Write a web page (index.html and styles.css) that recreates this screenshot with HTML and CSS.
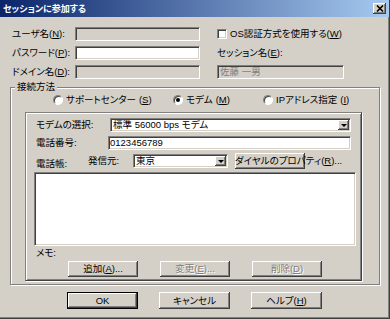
FILE: index.html
```html
<!DOCTYPE html>
<html lang="ja">
<head>
    <meta charset="UTF-8">
    <meta name="viewport" content="width=device-width, initial-scale=1.0">
    <title>セッションに参加する</title>
    <link rel="stylesheet" href="styles.css">
</head>
<body>
    <div class="dialog">
        <div class="titlebar">
            <span class="title">セッションに参加する</span>
            <span class="close">
                <svg width="8" height="7" viewBox="0 0 8 7">
                    <path d="M1 0.5 L7 6.5 M7 0.5 L1 6.5" stroke="#000" stroke-width="1.6" fill="none"/>
                </svg>
            </span>
        </div>

        <div class="account">
            <span class="lbl">ユーザ名<span class="key">(<u>N</u>):</span></span>
            <div class="field disabled"></div>
            <div class="check-row right">
                <span class="checkbox"></span>
                <span>OS認証方式を使用する<span class="key">(<u>W</u>)</span></span>
            </div>

            <span class="lbl">パスワード<span class="key">(<u>P</u>):</span></span>
            <div class="field"></div>
            <span class="lbl right">セッション名<span class="key">(<u>E</u>):</span></span>

            <span class="lbl">ドメイン名<span class="key">(<u>D</u>):</span></span>
            <div class="field disabled"></div>
            <div class="field disabled dim right">佐藤 一男</div>
        </div>

        <fieldset class="group">
            <legend>接続方法</legend>
            <div class="radio-row">
                <div class="radio-item wide"><span class="radio"></span>サポートセンター<span class="key">(<u>S</u>)</span></div>
                <div class="radio-item mid"><span class="radio checked"></span>モデム<span class="key">(<u>M</u>)</span></div>
                <div class="radio-item"><span class="radio"></span>IPアドレス指定<span class="key">(<u>I</u>)</span></div>
            </div>

            <div class="panel">
                <div class="row">
                    <span class="lbl modem-lbl">モデムの選択<span class="key">:</span></span>
                    <div class="field combo modem-combo">
                        <span class="combo-text">標準 56000 bps モデム</span>
                        <span class="combo-btn"><span class="arrow"></span></span>
                    </div>
                </div>
                <div class="row row-phone">
                    <span class="lbl phone-lbl">電話番号<span class="key">:</span></span>
                    <div class="field phone-field">0123456789</div>
                </div>
                <div class="row row-book">
                    <span class="lbl book-lbl">電話帳<span class="key">:</span></span>
                    <span class="lbl from-lbl">発信元<span class="key">:</span></span>
                    <div class="field combo from-combo">
                        <span class="combo-text">東京</span>
                        <span class="combo-btn"><span class="arrow"></span></span>
                    </div>
                    <button class="btn dial-btn">ダイヤルのプロパティ<span class="key">(<u>R</u>)...</span></button>
                </div>
                <div class="field memo"></div>
                <div class="memo-lbl">メモ<span class="key">:</span></div>
                <div class="btn-row">
                    <button class="btn">追加<span class="key">(<u>A</u>)...</span></button>
                    <button class="btn off">変更<span class="key">(<u>E</u>)...</span></button>
                    <button class="btn off">削除<span class="key">(<u>D</u>)</span></button>
                </div>
            </div>
        </fieldset>

        <div class="footer">
            <button class="btn default">OK</button>
            <button class="btn">キャンセル</button>
            <button class="btn">ヘルプ<span class="key">(<u>H</u>)</span></button>
        </div>
    </div>
</body>
</html>
```

FILE: styles.css
```css
body {
    margin: 0;
    background-color: #d4d0c8;
    font-family: "Liberation Sans", "Noto Sans CJK JP", sans-serif;
    font-size: 9.5px;
    font-feature-settings: "palt";
    color: #000;
}
u {
    text-decoration: underline;
    text-underline-offset: 1px;
}
.key {
    font-family: "Liberation Sans", sans-serif;
}
.dialog {
    width: 390px;
    height: 319px;
    box-sizing: border-box;
    border-right: 1px solid #404040;
    border-bottom: 1px solid #404040;
    box-shadow: inset -1px -1px #808080;
    overflow: hidden;
}

/* title bar */
.titlebar {
    height: 17px;
    display: flex;
    align-items: center;
    padding: 0 3px;
    background: linear-gradient(to right, #0a246a, #a6caf0);
}
.title {
    color: white;
    font-weight: bold;
    font-size: 9px;
    line-height: 12px;
}
.close {
    margin-left: auto;
    width: 13px;
    height: 11px;
    box-sizing: border-box;
    display: flex;
    align-items: center;
    justify-content: center;
    background: #d4d0c8;
    box-shadow: inset -1px -1px #404040, inset 1px 1px #fff, inset -2px -2px #808080;
}

/* top fields */
.account {
    display: grid;
    grid-template-columns: 63px 125px 17px 127px;
    grid-auto-rows: 14px;
    row-gap: 5px;
    align-items: center;
    padding: 10px 0 0 12px;
}
.account .right {
    grid-column: 4;
}
.lbl {
    line-height: 14px;
    white-space: nowrap;
}
.field {
    height: 14px;
    box-sizing: border-box;
    background: white;
    border: 1px solid;
    border-color: #808080 #fff #fff #808080;
    box-shadow: inset 1px 1px #404040, inset -1px -1px #d4d0c8;
    padding: 0 2px;
    line-height: 12px;
    white-space: nowrap;
    overflow: hidden;
}
.field.disabled {
    background: #d4d0c8;
}
.field.dim {
    color: #808080;
}
.check-row {
    display: flex;
    align-items: center;
    gap: 3px;
    line-height: 14px;
    white-space: nowrap;
}
.checkbox {
    width: 10px;
    height: 10px;
    box-sizing: border-box;
    background: white;
    border: 1px solid;
    border-color: #808080 #fff #fff #808080;
    box-shadow: inset 1px 1px #404040, inset -1px -1px #d4d0c8;
}

/* connection group */
.group {
    width: 370px;
    min-width: 0;
    box-sizing: border-box;
    margin: 2px 0 0 10px;
    padding: 0 0 3px 0;
    border: 1px solid #808080;
    box-shadow: inset 1px 1px #fff, 1px 1px #fff;
}
.group legend {
    margin-left: 4px;
    padding: 0 2px;
    line-height: 12px;
    background: #d4d0c8;
}
.radio-row {
    display: flex;
    margin-top: 1px;
    padding-left: 42px;
    line-height: 12px;
}
.radio-item {
    display: flex;
    align-items: center;
    gap: 3px;
    white-space: nowrap;
}
.radio-item.wide {
    width: 120px;
}
.radio-item.mid {
    width: 90px;
}
.radio {
    width: 10px;
    height: 10px;
    box-sizing: border-box;
    border-radius: 50%;
    background: white;
    border: 1px solid;
    border-color: #808080 #fff #fff #808080;
    box-shadow: inset 1px 1px #404040;
    display: flex;
    align-items: center;
    justify-content: center;
}
.radio.checked::after {
    content: "";
    width: 4px;
    height: 4px;
    border-radius: 50%;
    background: #000;
}

.panel {
    width: 337px;
    height: 169px;
    box-sizing: border-box;
    margin: 6px 0 0 14px;
    padding: 5px 0 0 8px;
    border: 1px solid;
    border-color: #808080 #404040 #404040 #808080;
    box-shadow: inset 1px 1px #fff, inset -1px -1px #808080, 1px 1px #fff;
}
.row {
    display: flex;
    align-items: center;
    height: 14px;
    padding-left: 2px;
}
.modem-lbl {
    width: 74px;
}
.modem-combo {
    width: 241px;
}
.row-phone {
    margin-top: 4px;
}
.phone-lbl {
    width: 72px;
}
.phone-field {
    width: 243px;
    padding-left: 1px;
}
.row-book {
    margin-top: 3px;
    height: 16px;
}
.book-lbl {
    width: 52px;
    align-self: flex-end;
    line-height: 10px;
}
.from-lbl {
    width: 45px;
}
.from-combo {
    width: 95px;
}
.dial-btn {
    margin-left: 7px;
    width: 116px;
}
.combo {
    display: flex;
    align-items: center;
    padding: 0 0 0 2px;
}
.combo-text {
    flex: 1;
}
.combo-btn {
    width: 11px;
    height: 10px;
    box-sizing: border-box;
    margin-right: 1px;
    display: flex;
    align-items: center;
    justify-content: center;
    background: #d4d0c8;
    box-shadow: inset -1px -1px #404040, inset 1px 1px #fff, inset -2px -2px #808080;
}
.arrow {
    width: 0;
    height: 0;
    border-left: 3px solid transparent;
    border-right: 3px solid transparent;
    border-top: 3px solid #000;
}
.memo {
    width: 322px;
    height: 74px;
    margin-top: 3px;
}
.memo-lbl {
    margin-top: 1px;
    padding-left: 2px;
    line-height: 12px;
}
.btn-row {
    display: flex;
    gap: 22px;
    margin-top: 2px;
    padding-left: 34px;
}

/* buttons */
.btn {
    width: 70px;
    height: 16px;
    padding: 0;
    border: none;
    background: #d4d0c8;
    font-family: inherit;
    font-size: 9.5px;
    font-feature-settings: "palt";
    line-height: 12px;
    color: #000;
    white-space: nowrap;
    box-shadow: inset -1px -1px #404040, inset 1px 1px #fff, inset -2px -2px #808080;
}
.btn.off {
    color: #808080;
    text-shadow: 1px 1px #fff;
}
.footer {
    display: flex;
    gap: 21px;
    margin-top: 7px;
    padding-left: 67px;
}
.footer .btn {
    width: 71px;
    height: 17px;
}
.btn.default {
    border: 1px solid #000;
}
```
